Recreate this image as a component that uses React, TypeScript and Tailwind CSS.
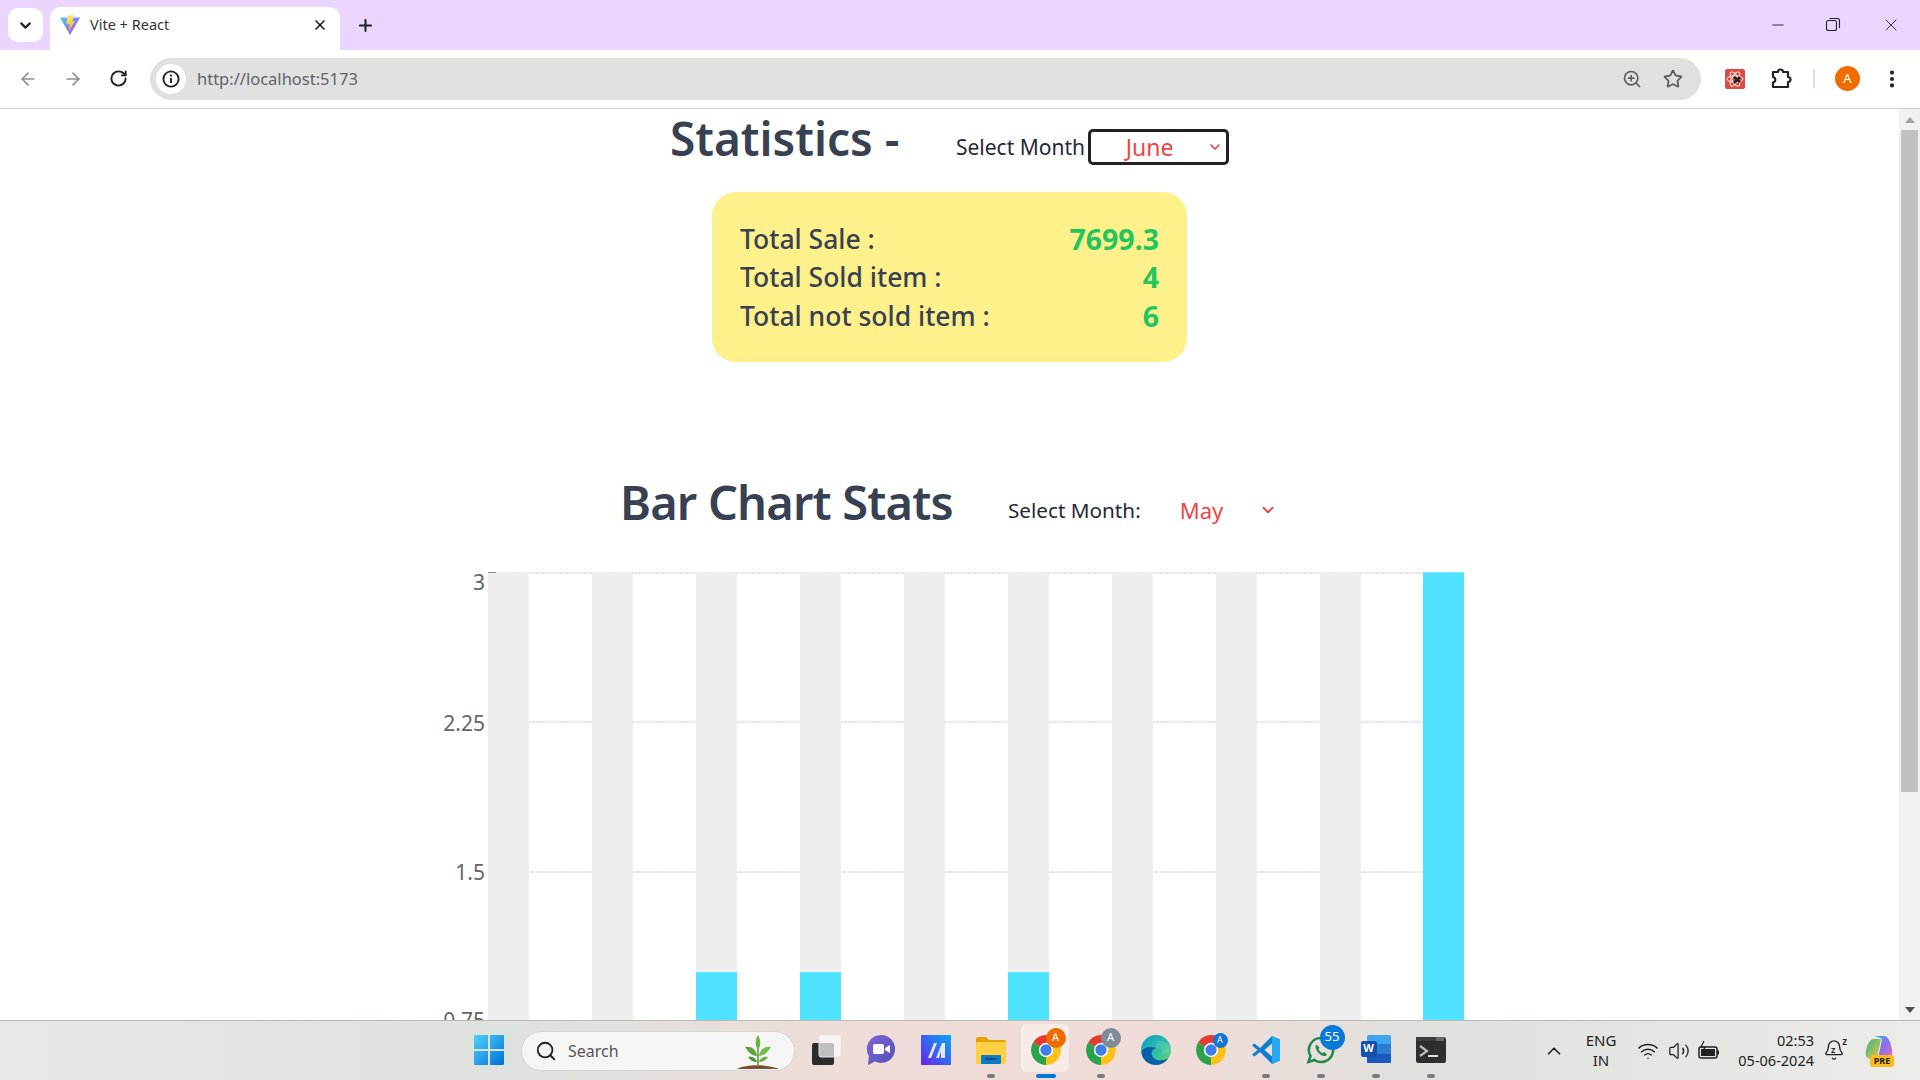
import { ArrowLeft, ArrowRight, Bell, ChevronDown, ChevronUp, Plus, RotateCw, Search, Star, X, ZoomIn, EllipsisVertical, Minus, Volume2, Wifi } from "lucide-react"

const uiFont = "font-['Noto_Sans',sans-serif]"

const bars = [
  { x: 88, value: 0 },
  { x: 192, value: 0 },
  { x: 296, value: 1 },
  { x: 400, value: 1 },
  { x: 504, value: 0 },
  { x: 608, value: 1 },
  { x: 712, value: 0 },
  { x: 816, value: 0 },
  { x: 920, value: 0 },
  { x: 1023, value: 3 },
]

const ticks = [
  { label: "3", y: 8, textY: 25 },
  { label: "2.25", y: 157, textY: 166 },
  { label: "1.5", y: 307, textY: 315 },
  { label: "0.75", y: 456, textY: 463 },
]

const ViteLogo = () => (
  <svg width="22" height="22" viewBox="0 0 22 22">
    <defs>
      <linearGradient id="vite-a" x1="0" y1="0" x2="1" y2="1">
        <stop offset="0" stopColor="#41d1ff" />
        <stop offset="1" stopColor="#bd34fe" />
      </linearGradient>
      <linearGradient id="vite-b" x1="0" y1="0" x2="0" y2="1">
        <stop offset="0" stopColor="#ffea83" />
        <stop offset="1" stopColor="#ffa800" />
      </linearGradient>
    </defs>
    <path d="M1 3.5 L21 3.5 L11 21 Z" fill="url(#vite-a)" />
    <path d="M8 1.5 L15.5 1 L13.5 7 L16 7 L9.5 18 L10.5 10 L7.5 10 Z" fill="url(#vite-b)" />
  </svg>
)

const ChromeIcon = ({ size = 34 }: { size?: number }) => (
  <svg width={size} height={size} viewBox="0 0 34 34">
    <path d="M17 17 L2.3 8.5 A17 17 0 0 1 31.7 8.5 Z" fill="#e33b2e" />
    <path d="M17 17 L31.7 8.5 A17 17 0 0 1 17 34 Z" fill="#fbc116" />
    <path d="M17 17 L17 34 A17 17 0 0 1 2.3 8.5 Z" fill="#2ba24c" />
    <circle cx="17" cy="17" r="8.2" fill="#fff" />
    <circle cx="17" cy="17" r="6.4" fill="#3f7de8" />
  </svg>
)

const TaskIcon = ({ children, running, active }: { children: React.ReactNode; running?: boolean; active?: boolean }) => (
  <div className="relative flex h-[60px] w-[55px] shrink-0 items-center justify-center">
    {active && <div className="absolute left-[3px] top-[3px] h-[48px] w-[48px] rounded-[5px] bg-[#f7ebe8]" />}
    <div className="relative mb-[2px] flex items-center justify-center">{children}</div>
    {running && <div className="absolute bottom-[3px] left-[24px] h-[4px] w-[8px] rounded-full bg-[#7a7a7a]" />}
    {active && <div className="absolute bottom-[3px] left-[18px] h-[4px] w-[20px] rounded-full bg-[#0078d4]" />}
  </div>
)

const Badge = ({ children, className }: { children: React.ReactNode; className: string }) => (
  <div className={`absolute flex items-center justify-center rounded-full ${className}`}>{children}</div>
)

export default function App() {
  return (
    <div className={`flex h-screen w-full flex-col overflow-hidden bg-white ${uiFont}`}>
      {/* tab strip */}
      <div className="flex h-[50px] shrink-0 items-end bg-[#e9d5fe]">
        <div className="ml-[8px] mt-[8px] flex h-[34px] w-[35px] items-center justify-center self-start rounded-[10px] bg-white">
          <ChevronDown size={17} strokeWidth={3} className="text-[#222]" />
        </div>
        <div className="ml-[7px] flex h-[43px] w-[290px] items-center rounded-t-[11px] bg-white pb-[7px] pl-[9px] pr-[12px]">
          <ViteLogo />
          <span className="ml-[9px] flex-1 text-[14.5px] text-[#333]">Vite + React</span>
          <X size={16} strokeWidth={2.6} className="text-[#222]" />
        </div>
        <div className="ml-[14px] mt-[7px] flex h-[36px] w-[22px] items-center justify-center self-start">
          <Plus size={19} strokeWidth={2.6} className="text-[#222]" />
        </div>
        <div className="flex-1" />
        <div className="flex h-[50px] items-center">
          <Minus size={18} strokeWidth={1.2} className="mr-[38px] text-[#222]" />
          <svg width="16" height="16" viewBox="0 0 16 16" fill="none" stroke="#222" strokeWidth="1.1" className="mr-[40px]">
            <rect x="1.5" y="3.5" width="10" height="10" rx="2" />
            <path d="M4.5 1.5 H12.5 A2 2 0 0 1 14.5 3.5 V11" />
          </svg>
          <X size={20} strokeWidth={1.1} className="mr-[19px] text-[#222]" />
        </div>
      </div>

      {/* toolbar */}
      <div className="flex h-[59px] shrink-0 items-center border-b border-[#cfcfcf] bg-white pb-[1px]">
        <ArrowLeft size={20} strokeWidth={2} className="ml-[18px] text-[#8d8d8d]" />
        <ArrowRight size={20} strokeWidth={2} className="ml-[25px] text-[#8d8d8d]" />
        <RotateCw size={19} strokeWidth={2.4} className="ml-[26px] text-[#222]" />
        <div className="ml-[22px] flex h-[42px] w-[1551px] items-center rounded-full bg-[#e0e0e0] pl-[6px]">
          <div className="flex h-[30px] w-[30px] items-center justify-center rounded-full bg-white">
            <svg width="18" height="18" viewBox="0 0 18 18" fill="none" stroke="#222" strokeWidth="1.9">
              <circle cx="9" cy="9" r="7.6" />
              <path d="M9 8 V13 M9 4.6 V6.4" />
            </svg>
          </div>
          <span className="ml-[11px] flex-1 pt-[2px] text-[16.5px] text-[#5f6368]">http://localhost:5173</span>
          <ZoomIn size={20} strokeWidth={2} className="mr-[21px] text-[#5f5f5f]" />
          <Star size={20} strokeWidth={2.2} className="mr-[18px] text-[#5f5f5f]" />
        </div>
        <div className="ml-[24px] flex h-[20px] w-[20px] items-center justify-center rounded-[2px] bg-[#dd4b44]">
          <svg width="18" height="18" viewBox="0 0 18 18" fill="none" stroke="#fff" strokeWidth="0.9">
            <ellipse cx="9" cy="9" rx="8" ry="3.2" />
            <ellipse cx="9" cy="9" rx="8" ry="3.2" transform="rotate(60 9 9)" />
            <ellipse cx="9" cy="9" rx="8" ry="3.2" transform="rotate(120 9 9)" />
            <path d="M8 7 L14 12 M14 7 L8 13" stroke="#222" strokeWidth="2.6" />
          </svg>
        </div>
        <svg width="24" height="24" viewBox="0 0 24 24" fill="none" stroke="#222" strokeWidth="2.2" className="ml-[24px]">
          <path d="M9 5 A2.5 2.5 0 0 1 14 5 H19 V10 A2.5 2.5 0 0 1 19 15 V20 H4 V15.5 A2.8 2.8 0 0 0 4 10 V5 Z" strokeLinejoin="round" />
        </svg>
        <div className="ml-[20px] h-[19px] w-[2px] bg-[#e9d5fe]" />
        <div className="ml-[20px] flex h-[25px] w-[25px] items-center justify-center rounded-full bg-[#ef6c00] text-[13px] text-white">A</div>
        <EllipsisVertical size={22} strokeWidth={2.6} className="ml-[21px] text-[#222]" />
      </div>

      {/* page */}
      <div className="flex min-h-0 flex-1">
        <div className="min-w-0 flex-1 overflow-hidden">
          <div className="flex h-[58px] items-center justify-center">
            <h1 className="w-[230px] shrink-0 whitespace-nowrap text-[46px] font-[560] leading-[58px] text-[#374151]">Statistics -</h1>
            <label className="ml-[56px] mt-[19px] text-[21px] text-[#1f2937]">Select Month</label>
            <div className="relative ml-[3px] mt-[18px] flex h-[36px] w-[141px] items-center justify-center rounded-[5px] border-[3px] border-[#222] pr-[18px] text-[23px] text-[#ef4444]">
              June
              <ChevronDown size={16} strokeWidth={2.6} className="absolute right-[3px] top-[7px]" />
            </div>
          </div>

          <div className="ml-[712px] mt-[25px] flex h-[170px] w-[475px] flex-col justify-center gap-[1px] rounded-[24px] bg-[#fef08a] px-[28px] pt-[2px] text-[26.5px] font-medium leading-[37.5px] text-[#374151]">
            <div className="flex justify-between">
              <span>Total Sale :</span>
              <span className="text-[28.5px] font-bold text-[#22c55e]">7699.3</span>
            </div>
            <div className="flex justify-between">
              <span>Total Sold item :</span>
              <span className="text-[28.5px] font-bold text-[#22c55e]">4</span>
            </div>
            <div className="flex justify-between">
              <span>Total not sold item :</span>
              <span className="text-[28.5px] font-bold text-[#22c55e]">6</span>
            </div>
          </div>

          <div className="ml-[620px] mt-[105px] flex h-[70px] items-center">
            <h2 className="w-[332px] shrink-0 whitespace-nowrap text-[47px] font-[560] leading-[70px] tracking-[-0.8px] text-[#374151]">Bar Chart Stats</h2>
            <label className="ml-[56px] mt-[18px] text-[20.7px] text-[#1f2937]">Select Month:</label>
            <div className="relative ml-[39px] mt-[16px] flex w-[100px] items-center text-[22px] text-[#ef4444]">
              May
              <ChevronDown size={18} strokeWidth={2.6} className="absolute left-[79px] top-[7px]" />
            </div>
          </div>

          <svg width="1100" height="500" viewBox="0 0 1100 500" className="ml-[400px] mt-[28px] block">
            {ticks.map((t) => (
              <line key={t.label} x1="88" x2="1064" y1={t.y} y2={t.y} stroke="#c4c4c4" strokeDasharray="2 1" />
            ))}
            <line x1="88" x2="96" y1="7.5" y2="7.5" stroke="#888" />
            {bars.map((b) => (
              <g key={b.x}>
                {b.value < 3 && <rect x={b.x} y="8" width="41" height="492" fill="#eee" />}
                {b.value > 0 && <rect x={b.x} y={607 - b.value * 199.9} width="41" height="500" fill="#50e3ff" />}
              </g>
            ))}
            {ticks.map((t) => (
              <text key={t.label} x="85" y={t.textY} textAnchor="end" fontSize="21" fill="#666">
                {t.label}
              </text>
            ))}
          </svg>
        </div>

        {/* scrollbar */}
        <div className="flex w-[21px] shrink-0 flex-col items-center bg-[#f1f1f1]">
          <div className="flex h-[21px] items-center justify-center">
            <div className="h-0 w-0 border-x-[5px] border-b-[6px] border-x-transparent border-b-[#a3a3a3]" />
          </div>
          <div className="h-[662px] w-[17px] bg-[#c1c1c1]" />
          <div className="flex-1" />
          <div className="flex h-[21px] items-center justify-center">
            <div className="h-0 w-0 border-x-[5px] border-t-[6px] border-x-transparent border-t-[#505050]" />
          </div>
        </div>
      </div>

      {/* taskbar */}
      <div className="flex h-[60px] shrink-0 items-center border-t border-[#b9b9b7] bg-[linear-gradient(90deg,#e9e8e4_0%,#dde2df_26%,#efdcd8_45%,#efdcd8_62%,#dee2de_76%,#ecebe7_100%)] pl-[461px]">
        <TaskIcon>
          <svg width="32" height="32" viewBox="0 0 32 32">
            <defs>
              <linearGradient id="win" x1="0" y1="0" x2="1" y2="1">
                <stop offset="0" stopColor="#4fd2fb" />
                <stop offset="1" stopColor="#0070d6" />
              </linearGradient>
            </defs>
            <path d="M2 1 H15 V15 H1 V2 A1 1 0 0 1 2 1 Z M17 1 H30 A1 1 0 0 1 31 2 V15 H17 Z M1 17 H15 V31 H2 A1 1 0 0 1 1 30 Z M17 17 H31 V30 A1 1 0 0 1 30 31 H17 Z" fill="url(#win)" />
          </svg>
        </TaskIcon>

        <div className="relative ml-[5px] mr-[3px] flex h-[40px] w-[274px] shrink-0 items-center rounded-full border border-[#d5d5d3] bg-[#f5f5f3] pl-[13px]">
          <Search size={22} strokeWidth={2} className="text-[#222]" />
          <span className="ml-[11px] text-[16px] text-[#555]">Search</span>
          <svg width="44" height="38" viewBox="0 0 44 38" className="absolute bottom-0 right-[14px]">
            <path d="M1 37 C10 32 32 32 43 37 Z" fill="#7d4f32" />
            <path d="M22 33 V14" stroke="#5e9b3a" strokeWidth="1.6" />
            <path d="M22 18 C18 12 20 6 22 3 C24 7 26 12 22 18 Z" fill="#6eb045" />
            <path d="M21 24 C16 24 12 20 9 15 C15 14 20 17 21 24 Z" fill="#5ea33a" />
            <path d="M23 24 C28 24 32 20 35 15 C29 14 24 17 23 24 Z" fill="#7ab94e" />
            <path d="M21 30 C17 30 14 28 12 25 C16 24 20 26 21 30 Z" fill="#4e9030" />
            <path d="M23 30 C27 30 30 28 32 25 C28 24 24 26 23 30 Z" fill="#6aad40" />
          </svg>
        </div>

        <TaskIcon>
          <svg width="32" height="32" viewBox="0 0 32 32">
            <rect x="2" y="9" width="22" height="22" rx="2" fill="#2b2b2b" />
            <rect x="9" y="1" width="22" height="22" rx="2" fill="#fff" fillOpacity="0.7" stroke="#e4e4e4" />
          </svg>
        </TaskIcon>
        <TaskIcon>
          <svg width="30" height="32" viewBox="0 0 30 32">
            <defs>
              <linearGradient id="chat" x1="0" y1="0" x2="1" y2="1">
                <stop offset="0" stopColor="#8264d6" />
                <stop offset="1" stopColor="#4f52b8" />
              </linearGradient>
            </defs>
            <path d="M15 1 A14 14 0 1 1 9 27.6 L2 31 L2.8 22 A14 14 0 0 1 15 1 Z" fill="url(#chat)" />
            <rect x="7" y="10" width="11" height="10" rx="2" fill="#fff" />
            <path d="M19 14 L24 11 V19 L19 16 Z" fill="#fff" />
          </svg>
        </TaskIcon>
        <TaskIcon>
          <svg width="30" height="30" viewBox="0 0 30 30">
            <defs>
              <linearGradient id="mapp" x1="1" y1="0" x2="0" y2="1">
                <stop offset="0" stopColor="#07a6f5" />
                <stop offset="1" stopColor="#6a22f0" />
              </linearGradient>
            </defs>
            <rect width="30" height="30" fill="url(#mapp)" />
            <path d="M7 23 L13 8 H16 L10 23 Z M15 23 L21 8 H24 L24 23 H20 L20 16 L18 23 Z" fill="#fff" fillOpacity="0.85" />
          </svg>
        </TaskIcon>
        <TaskIcon running>
          <svg width="30" height="28" viewBox="0 0 30 28">
            <path d="M0 3 A2 2 0 0 1 2 1 H10 L13 4 H28 A2 2 0 0 1 30 6 V8 H0 Z" fill="#e2a500" />
            <rect y="6" width="30" height="22" rx="1.5" fill="#ffd140" />
            <rect x="5" y="19" width="20" height="9" rx="1" fill="#0a7bc6" />
            <rect x="10" y="22" width="10" height="1.6" fill="#063a66" />
          </svg>
        </TaskIcon>
        <TaskIcon active>
          <div className="relative">
            <ChromeIcon size={30} />
            <Badge className="-right-[5px] -top-[7px] h-[20px] w-[20px] bg-[#ee6c00] text-[11px] text-white">A</Badge>
          </div>
        </TaskIcon>
        <TaskIcon running>
          <div className="relative">
            <ChromeIcon size={30} />
            <Badge className="-right-[5px] -top-[7px] h-[20px] w-[20px] bg-[#7f8b96] text-[11px] text-white">A</Badge>
          </div>
        </TaskIcon>
        <TaskIcon>
          <svg width="30" height="30" viewBox="0 0 30 30">
            <defs>
              <linearGradient id="edge-a" x1="0" y1="0" x2="1" y2="1">
                <stop offset="0" stopColor="#0c9fc9" />
                <stop offset="0.6" stopColor="#2fc2a0" />
                <stop offset="1" stopColor="#7fdc5c" />
              </linearGradient>
            </defs>
            <circle cx="15" cy="15" r="15" fill="url(#edge-a)" />
            <path d="M0.5 17 C1 26 9 30 15 30 C20 30 25 27 27 23 C22 26 13 27 11 20 C10 17 12 14 15 13 C9 11 2 12 0.5 17 Z" fill="#0b5fa8" />
            <path d="M15 13 C20 13 22 16 20 19 C24 19 30 18 30 14 C29 8 23 5 17 6 C15 8 14 11 15 13 Z" fill="#dff3ea" fillOpacity="0.15" />
          </svg>
        </TaskIcon>
        <TaskIcon>
          <div className="relative">
            <ChromeIcon size={30} />
            <Badge className="-right-[2px] -top-[2px] h-[15px] w-[15px] bg-[#1173d4] text-[9px] text-white">A</Badge>
          </div>
        </TaskIcon>
        <TaskIcon running>
          <svg width="30" height="30" viewBox="0 0 30 30">
            <path d="M21 1 L29 4.5 V25.5 L21 29 L9 17 L3.5 21.5 L1 19.5 L6.5 15 L1 10.5 L3.5 8.5 L9 13 Z M21 8.5 L13.5 15 L21 21.5 Z" fill="#0f7fce" fillRule="evenodd" />
            <path d="M21 1 L29 4.5 V25.5 L21 29 Z" fill="#25a8f0" />
          </svg>
        </TaskIcon>
        <TaskIcon running>
          <div className="relative">
            <svg width="30" height="30" viewBox="0 0 30 30" fill="none">
              <path d="M15 3 A12 12 0 1 1 8.5 25 L2.5 27 L4.5 21 A12 12 0 0 1 15 3 Z" stroke="#25894d" strokeWidth="2.6" />
              <path d="M10.5 9.5 C8 12 11 17 13.5 19 C16 21 19.5 22 21 19.5 L18 17 L16.5 18 C15 17.5 13 15.5 12.5 14 L13.5 12.5 Z" fill="#25894d" />
            </svg>
            <Badge className="-right-[9px] -top-[10px] h-[25px] w-[25px] bg-[#0a78d7] text-[13px] text-white">55</Badge>
          </div>
        </TaskIcon>
        <TaskIcon running>
          <div className="relative h-[30px] w-[30px]">
            <div className="absolute right-0 top-0 flex h-[29px] w-[24px] flex-col overflow-hidden rounded-[2px]">
              <div className="h-1/3 bg-[#41a5ee]" />
              <div className="h-1/3 bg-[#2b7cd3]" />
              <div className="h-1/3 bg-[#185abd]" />
            </div>
            <div className="absolute left-0 top-[6px] flex h-[16px] w-[16px] items-center justify-center rounded-[2px] bg-[#1650ae] text-[11px] font-bold text-white">W</div>
          </div>
        </TaskIcon>
        <TaskIcon running>
          <svg width="30" height="26" viewBox="0 0 30 26">
            <rect width="30" height="26" rx="2.5" fill="#2e2e2e" />
            <rect x="20" width="8" height="4" fill="#6a6a6a" />
            <rect width="20" height="4" fill="#3f3f3f" />
            <path d="M4 9 L11 14 L4 19" fill="none" stroke="#bdbdbd" strokeWidth="2.2" />
            <rect x="12" y="18" width="10" height="2" fill="#e0e0e0" />
          </svg>
        </TaskIcon>

        {/* tray */}
        <div className="flex flex-1 items-center justify-end pr-[26px] text-[#222]">
          <ChevronUp size={22} strokeWidth={1.8} />
          <div className="mb-[1px] ml-[11px] w-[50px] text-center text-[15px] leading-[20px]">
            ENG
            <br />
            IN
          </div>
          <Wifi size={22} strokeWidth={1.6} className="ml-[11px]" />
          <Volume2 size={22} strokeWidth={1.4} className="ml-[9px]" />
          <svg width="24" height="22" viewBox="0 0 24 22" fill="none" stroke="#222" strokeWidth="1.5" className="ml-[7px]">
            <rect x="2" y="7" width="18" height="11" rx="2" />
            <rect x="4" y="9" width="14" height="7" fill="#222" stroke="none" />
            <path d="M21 10.5 V14.5" strokeWidth="2" />
            <path d="M7 1 L4 7 H8 L6 11" strokeWidth="1.2" />
          </svg>
          <div className="mb-[1px] ml-[3px] w-[90px] text-right text-[14.5px] leading-[20px]">
            02:53
            <br />
            <span className="whitespace-nowrap">05-06-2024</span>
          </div>
          <div className="relative ml-[9px] h-[24px] w-[24px]">
            <Bell size={22} strokeWidth={1.5} />
            <span className="absolute left-[8px] top-[6px] text-[9px] font-semibold leading-none">z</span>
            <span className="absolute right-0 top-[-3px] text-[10px] font-semibold leading-none">z</span>
          </div>
          <div className="relative ml-[17px] h-[32px] w-[30px]">
            <svg width="30" height="28" viewBox="0 0 30 28">
              <defs>
                <linearGradient id="copilot" x1="0" y1="0" x2="1" y2="1">
                  <stop offset="0" stopColor="#2fb4f0" />
                  <stop offset="0.5" stopColor="#8b6fe8" />
                  <stop offset="1" stopColor="#e66cc0" />
                </linearGradient>
                <linearGradient id="copilot2" x1="0" y1="0" x2="1" y2="1">
                  <stop offset="0" stopColor="#2fb47a" />
                  <stop offset="1" stopColor="#f6c64a" />
                </linearGradient>
              </defs>
              <path d="M10 1 H20 C24 1 26 6 28 14 C29 20 27 24 23 24 H14 L18 4 C16 2 12 2 10 1 Z" fill="url(#copilot)" />
              <path d="M10 4 H17 L13 24 H7 C2 24 1 20 2 15 C4 8 6 4 10 4 Z" fill="url(#copilot2)" />
            </svg>
            <div className="absolute bottom-0 left-[6px] flex h-[12px] w-[24px] items-center justify-center rounded-[3px] bg-[#fcbc1c] text-[9px] font-bold leading-none text-[#222]">PRE</div>
          </div>
        </div>
      </div>
    </div>
  )
}
